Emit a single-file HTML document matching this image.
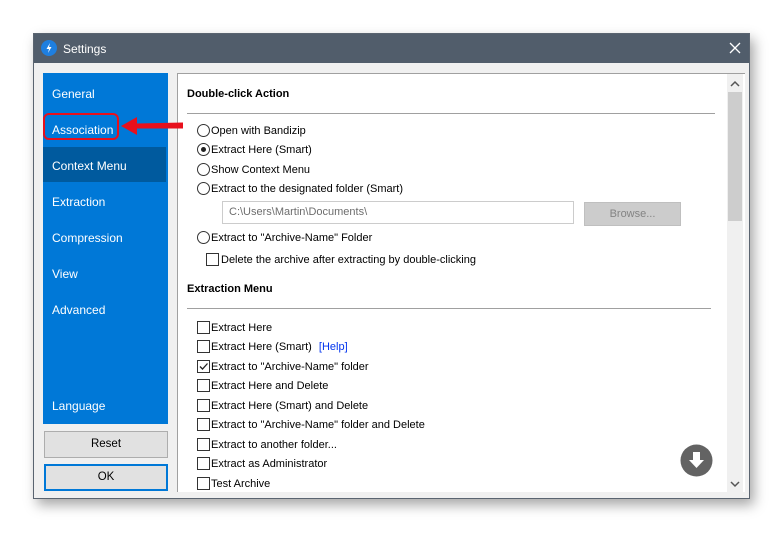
<!DOCTYPE html>
<html><head><style>
*{margin:0;padding:0;box-sizing:border-box}
body{width:783px;height:534px;background:#fff;font-family:"Liberation Sans",sans-serif;font-size:11px;color:#000;position:relative;overflow:hidden}
.a{position:absolute}
#win{left:33px;top:33px;width:717px;height:466px;background:#f0f0f0;border:1px solid #5a6470;box-shadow:4px 6px 12px rgba(0,0,0,.35)}
#title{left:0;top:0;width:715px;height:29px;background:#515d6b;color:#fff;font-size:12px}
.nav{left:9px;color:#fff;font-size:12px}
.t{white-space:nowrap}
.rb{width:13px;height:13px;border:1px solid #333;border-radius:50%;background:#fff}
.cb{width:13px;height:13px;border:1px solid #333;background:#fff}
.btn{background:#e1e1e1;border:1px solid #adadad;text-align:center;line-height:24px;font-size:11.5px}
</style></head><body>
<div id="win" class="a">
 <div id="title" class="a">
  <div class="a" style="left:7px;top:6px;width:16px;height:16px;border-radius:50%;background:#1e7fe0"></div>
  <svg class="a" style="left:7px;top:6px" width="16" height="16"><path d="M9 3 L5.5 9 H8 L7 13 L10.5 7 H8 Z" fill="#fff"/></svg>
  <div class="a t" style="left:29px;top:8px">Settings</div>
  <svg class="a" style="left:695px;top:8px" width="12" height="12"><path d="M1 1L11 11M11 1L1 11" stroke="#fff" stroke-width="1.3"/></svg>
 </div>
 <div class="a" style="left:9px;top:39px;width:125px;height:351px;background:#0078d7"></div>
 <div class="a" style="left:9px;top:113px;width:123px;height:35px;background:#005a9e"></div>
 <div class="a nav t" style="left:18px;top:53px">General</div>
 <div class="a nav t" style="left:18px;top:89px">Association</div>
 <div class="a nav t" style="left:18px;top:125px">Context Menu</div>
 <div class="a nav t" style="left:18px;top:161px">Extraction</div>
 <div class="a nav t" style="left:18px;top:197px">Compression</div>
 <div class="a nav t" style="left:18px;top:233px">View</div>
 <div class="a nav t" style="left:18px;top:269px">Advanced</div>
 <div class="a nav t" style="left:18px;top:365px">Language</div>
 <div class="a btn" style="left:10px;top:397px;width:124px;height:27px">Reset</div>
 <div class="a btn" style="left:10px;top:430px;width:124px;height:27px;border:2px solid #0078d7;line-height:23px">OK</div>
 <div class="a" style="left:143px;top:39px;width:568px;height:419px;background:#fff;border-left:1px solid #a0a0a0;border-top:1px solid #a0a0a0"></div>
 <div class="a" style="left:693px;top:40px;width:16px;height:418px;background:#f0f0f0"></div>
 <div class="a" style="left:694px;top:58px;width:14px;height:129px;background:#cdcdcd"></div>
 <svg class="a" style="left:696px;top:46px" width="10" height="8"><path d="M1 6L5 2L9 6" stroke="#555" stroke-width="1.5" fill="none"/></svg>
 <svg class="a" style="left:696px;top:446px" width="10" height="8"><path d="M1 2L5 6L9 2" stroke="#555" stroke-width="1.5" fill="none"/></svg>
</div>
<div class="a t" style="left:187px;top:88px;font-weight:bold">Double-click Action</div>
<div class="a" style="left:187px;top:113px;width:528px;height:1px;background:#a0a0a0"></div>
<div class="a rb" style="left:197px;top:124px"></div><div class="a t" style="left:211px;top:125px">Open with Bandizip</div>
<div class="a rb" style="left:197px;top:143px"></div><div class="a" style="left:201px;top:147px;width:5px;height:5px;border-radius:50%;background:#222"></div><div class="a t" style="left:211px;top:144px">Extract Here (Smart)</div>
<div class="a rb" style="left:197px;top:163px"></div><div class="a t" style="left:211px;top:164px">Show Context Menu</div>
<div class="a rb" style="left:197px;top:182px"></div><div class="a t" style="left:211px;top:183px">Extract to the designated folder (Smart)</div>
<div class="a" style="left:222px;top:201px;width:352px;height:23px;border:1px solid #ccc;background:#fff;color:#6d6d6d;padding:4px 6px">C:\Users\Martin\Documents\</div>
<div class="a" style="left:584px;top:202px;width:97px;height:24px;background:#ccc;border:1px solid #bfbfbf;color:#838383;text-align:center;line-height:22px">Browse...</div>
<div class="a rb" style="left:197px;top:231px"></div><div class="a t" style="left:211px;top:232px">Extract to "Archive-Name" Folder</div>
<div class="a cb" style="left:206px;top:253px"></div><div class="a t" style="left:221px;top:254px">Delete the archive after extracting by double-clicking</div>
<div class="a t" style="left:187px;top:283px;font-weight:bold">Extraction Menu</div>
<div class="a" style="left:187px;top:308px;width:524px;height:1px;background:#a0a0a0"></div>
<div class="a cb" style="left:197px;top:321px"></div><div class="a t" style="left:211px;top:322px">Extract Here</div>
<div class="a cb" style="left:197px;top:340px"></div><div class="a t" style="left:211px;top:341px">Extract Here (Smart) <span style="color:#0033ee;margin-left:4px">[Help]</span></div>
<div class="a cb" style="left:197px;top:360px"></div><svg class="a" style="left:198px;top:361px" width="11" height="11"><path d="M2 5.5L4.5 8L9.5 2.5" stroke="#222" stroke-width="1.3" fill="none"/></svg><div class="a t" style="left:211px;top:361px">Extract to "Archive-Name" folder</div>
<div class="a cb" style="left:197px;top:379px"></div><div class="a t" style="left:211px;top:380px">Extract Here and Delete</div>
<div class="a cb" style="left:197px;top:399px"></div><div class="a t" style="left:211px;top:400px">Extract Here (Smart) and Delete</div>
<div class="a cb" style="left:197px;top:418px"></div><div class="a t" style="left:211px;top:419px">Extract to "Archive-Name" folder and Delete</div>
<div class="a cb" style="left:197px;top:438px"></div><div class="a t" style="left:211px;top:439px">Extract to another folder...</div>
<div class="a cb" style="left:197px;top:457px"></div><div class="a t" style="left:211px;top:458px">Extract as Administrator</div>
<div class="a cb" style="left:197px;top:477px"></div><div class="a t" style="left:211px;top:478px">Test Archive</div>
<svg class="a" style="left:680px;top:444px" width="33" height="33"><circle cx="16.5" cy="16.5" r="16" fill="#636363"/><path d="M13 8H20V16H24L16.5 24L9 16H13Z" fill="#fff"/></svg>
<div class="a" style="left:43px;top:113px;width:76px;height:27px;border:2px solid #e8101c;border-radius:6px"></div>
<svg class="a" style="left:118px;top:114px" width="70" height="24"><path d="M3 12L19 3V9.5L65 8.5V14.5L19 14.5V21Z" fill="#e8101c"/></svg>
</body></html>
